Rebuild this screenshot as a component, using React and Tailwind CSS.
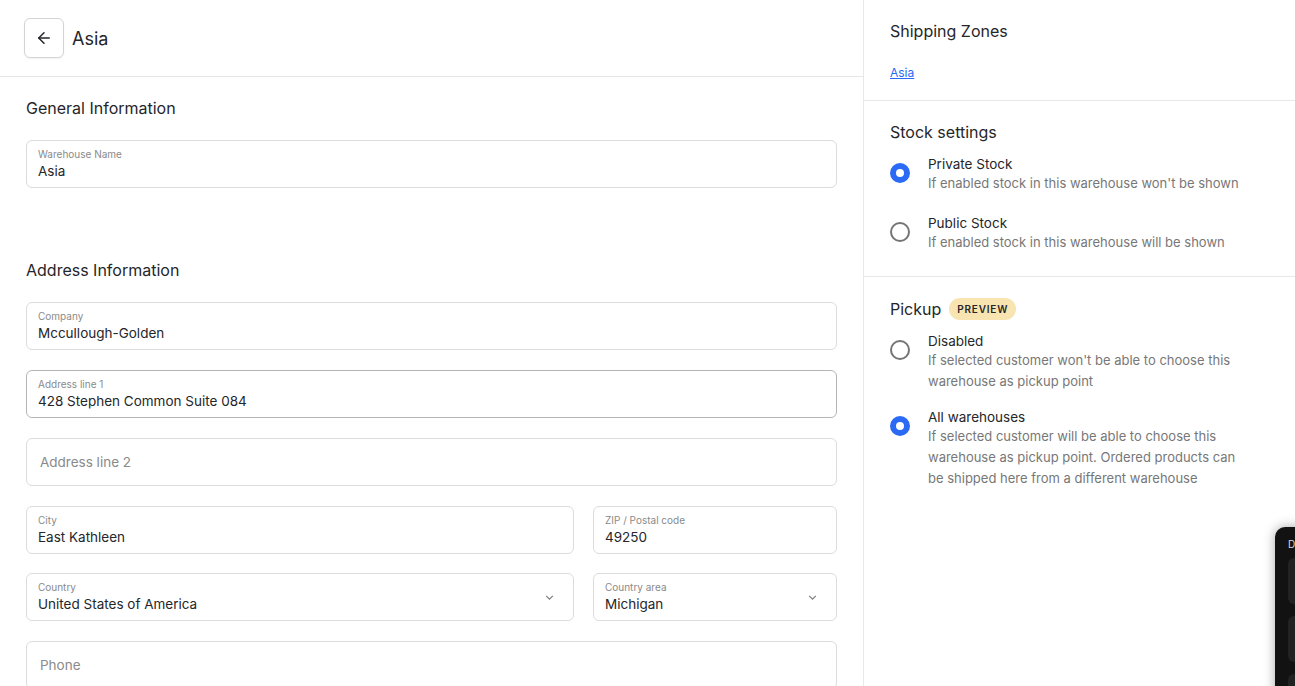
import React from "react";

const Field = ({ label, value, placeholder, select, hover, className = "" }) => (
  <div
    className={`relative h-12 rounded-md border bg-white ${
      hover ? "border-[#b5b5b5]" : "border-[#dcdcdc]"
    } ${className}`}
  >
    {label ? (
      <div className="px-[11px] pt-[6px]">
        <div className="text-[10px] leading-[14px] text-[#8a8a8a]">{label}</div>
        <div className="text-[13.5px] leading-[20px] text-[#25262a]">{value}</div>
      </div>
    ) : (
      <div className="flex h-full items-center px-[13px] text-[13.5px] text-[#8a8a8a]">
        {placeholder}
      </div>
    )}
    {select && (
      <svg
        className="absolute right-[18px] top-[18px]"
        width="11"
        height="11"
        viewBox="0 0 10 10"
        fill="none"
        stroke="#7a7a7a"
        strokeWidth="1"
      >
        <path d="M2 3.5 L5 6.5 L8 3.5" />
      </svg>
    )}
  </div>
);

const Radio = ({ checked }) =>
  checked ? (
    <div className="flex h-5 w-5 shrink-0 items-center justify-center rounded-full bg-[#2b6af5]">
      <div className="h-2 w-2 rounded-full bg-white" />
    </div>
  ) : (
    <div className="h-5 w-5 shrink-0 rounded-full border-2 border-[#757575]" />
  );

const Option = ({ checked, title, desc, className = "" }) => (
  <div className={`flex gap-[18px] ${className}`}>
    <div className="pt-[8px]">
      <Radio checked={checked} />
    </div>
    <div>
      <div className="text-[13.5px] leading-[18px] text-[#25262a]">{title}</div>
      <div className="text-[13px] leading-[21px] text-[#777777]">{desc}</div>
    </div>
  </div>
);

export default function App() {
  return (
    <div
      className="relative flex h-[686px] w-[1295px] overflow-hidden bg-white text-[#25262a]"
      style={{ fontFamily: "Inter, 'Noto Sans', sans-serif" }}
    >
      {/* Main form */}
      <div className="w-[864px] shrink-0 border-r border-[#e8e8e8]">
        <div className="flex h-[77px] items-center gap-2 border-b border-[#e6e6e6] pl-6">
          <button className="flex h-10 w-10 items-center justify-center rounded-md border border-[#d4d4d4] bg-white shadow-[0_1px_2px_rgba(0,0,0,0.06)]">
            <svg width="18" height="18" viewBox="0 0 24 24" fill="none" stroke="#25262a" strokeWidth="2" strokeLinecap="round" strokeLinejoin="round">
              <path d="M19 12H5" />
              <path d="M12 19l-7-7 7-7" />
            </svg>
          </button>
          <h1 className="text-[18px] font-normal">Asia</h1>
        </div>

        <div className="pl-[26px] pr-[26px]">
          <h2 className="mt-[20px] text-[16px] font-normal leading-[22px]">General Information</h2>
          <Field className="mt-[21px]" label="Warehouse Name" value="Asia" />

          <h2 className="mt-[71px] text-[16px] font-normal leading-[22px]">Address Information</h2>
          <div className="mt-[21px] flex flex-col gap-5">
            <Field label="Company" value="Mccullough-Golden" />
            <Field label="Address line 1" value="428 Stephen Common Suite 084" hover />
            <Field placeholder="Address line 2" />
            <div className="grid grid-cols-[548px_1fr] gap-[19px]">
              <Field label="City" value="East Kathleen" />
              <Field label="ZIP / Postal code" value="49250" />
            </div>
            <div className="-mt-[1px] grid grid-cols-[548px_1fr] gap-[19px]">
              <Field label="Country" value="United States of America" select />
              <Field label="Country area" value="Michigan" select />
            </div>
            <Field placeholder="Phone" />
          </div>
        </div>
      </div>

      {/* Sidebar */}
      <div className="flex-1">
        <div className="border-b border-[#e8e8e8] px-[26px] pb-[19px] pt-[20px]">
          <h2 className="text-[16px] font-normal leading-[22px]">Shipping Zones</h2>
          <a href="#" className="mt-[23px] block text-[12px] leading-[16px] text-[#2b6af5] underline">
            Asia
          </a>
        </div>

        <div className="border-b border-[#e8e8e8] px-[26px] pb-[23px] pt-[20px]">
          <h2 className="text-[16px] font-normal leading-[22px]">Stock settings</h2>
          <Option className="mt-[12px]" checked title="Private Stock" desc="If enabled stock in this warehouse won't be shown" />
          <Option className="mt-[20px]" title="Public Stock" desc="If enabled stock in this warehouse will be shown" />
        </div>

        <div className="px-[26px] pt-[21px]">
          <div className="flex items-center gap-2">
            <h2 className="text-[16px] font-normal leading-[22px]">Pickup</h2>
            <span className="rounded-full bg-[#f7e4b1] px-2 py-[5px] text-[10px] font-semibold leading-[12px] tracking-[0.08em] text-[#25262a]">
              PREVIEW
            </span>
          </div>
          <Option className="mt-[12px]" title="Disabled" desc={<>If selected customer won't be able to choose this<br />warehouse as pickup point</>} />
          <Option className="mt-[16px]" checked title="All warehouses" desc={<>If selected customer will be able to choose this<br />warehouse as pickup point. Ordered products can<br />be shipped here from a different warehouse</>} />
        </div>
      </div>

      {/* Floating dark panel */}
      <div className="absolute left-[1275px] top-[527px] h-[200px] w-[240px] rounded-tl-[10px] bg-[#121212] px-[13px] pt-[10px] shadow-[0_0_12px_rgba(0,0,0,0.35)]">
        <div className="text-[10px] text-[#dddddd]">D</div>
        <div className="mt-[6px] h-[46px] rounded-md bg-[#222222]" />
        <div className="mt-[12px] h-[46px] rounded-md bg-[#222222]" />
        <div className="mt-[12px] h-[46px] rounded-md bg-[#222222]" />
      </div>
    </div>
  );
}
